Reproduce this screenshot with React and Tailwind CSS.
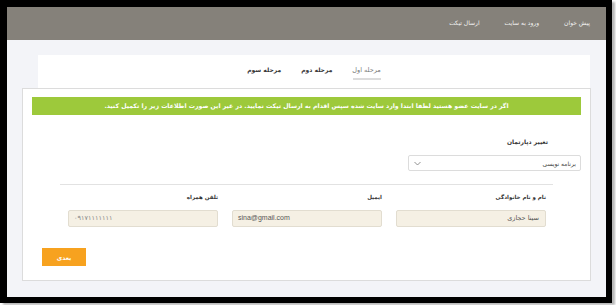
import React from "react";

export default function App() {
  const f = { fontFamily: '"DejaVu Sans", "Noto Sans", sans-serif' };
  return (
    <div className="w-[616px] h-[305px] bg-white overflow-hidden" style={f}>
      <div className="w-[612px] h-[303px] border-t-[7px] border-l-[7px] border-r-[6px] border-b-[6px] border-black bg-[#f3f4f8] shadow-[3px_2px_2px_#b8b8b8] flex flex-col" dir="rtl">
        {/* header */}
        <div className="h-[33px] bg-[#85817a] flex items-center gap-[25px] pr-[16px] pb-[3px] text-[6px] text-[#f4f4f4] shrink-0">
          <span>پیش خوان</span>
          <span>ورود به سایت</span>
          <span>ارسال تیکت</span>
        </div>

        {/* tabs card */}
        <div className="mt-[15px] mr-[16px] ml-[31px] h-[33px] bg-white flex justify-center gap-[20px] pt-[10px] text-[6.5px]">
          <div className="flex flex-col items-center">
            <span className="h-[10px] leading-[10px] text-[#777]">مرحله اول</span>
            <span className="mt-[3px] w-[28px] h-[2px] bg-[#dcdcdc]"></span>
          </div>
          <span className="h-[10px] leading-[10px] font-bold text-[#333] text-[6px]">مرحله دوم</span>
          <span className="h-[10px] leading-[10px] font-bold text-[#333] text-[6px]">مرحله سوم</span>
        </div>

        {/* form card */}
        <div className="mx-[15px] bg-white border border-[#dcdcdc] flex flex-col pt-[8px] pb-[14px]">
          <div className="mx-[9px] h-[18px] bg-[#9dc93b] flex items-center justify-center text-white font-bold text-[6.2px]">
            اگر در سایت عضو هستید لطفا ابتدا وارد سایت شده سپس اقدام به ارسال تیکت نمایید. در غیر این صورت اطلاعات زیر را تکمیل کنید.
          </div>

          <div className="mt-[22px] mr-[42px] h-[10px] leading-[10px] text-[6px] font-bold text-[#333]">
            تغییر دپارتمان
          </div>
          <div className="mt-[8px] mr-[9px] w-[173px] h-[16px] border border-[#dcdcdc] rounded-[2px] flex items-center justify-between px-[4px]">
            <span className="text-[6px] text-[#444]">برنامه نویسی</span>
            <svg width="7" height="5" viewBox="0 0 7 5" className="ml-[1px]">
              <path d="M0.5 1 L3.5 4 L6.5 1" fill="none" stroke="#777" strokeWidth="0.8" />
            </svg>
          </div>

          <div className="mt-[13px] mx-[37px] h-[1px] bg-[#e2e2e2]"></div>

          <div className="mt-[7px] mx-[44px] flex gap-[14px]">
            <div className="w-[150px] flex flex-col">
              <span className="h-[10px] leading-[10px] text-[5.5px] font-bold text-[#333]">نام و نام خانوادگی</span>
              <div className="mt-[8px] h-[17px] bg-[#f5f0e4] border border-[#e2ddd0] rounded-[2px] flex items-center px-[6px] text-[6.5px] text-[#555]">
                سینا حجازی
              </div>
            </div>
            <div className="w-[150px] flex flex-col">
              <span className="h-[10px] leading-[10px] text-[5.5px] font-bold text-[#333]">ایمیل</span>
              <div className="mt-[8px] h-[17px] bg-[#f5f0e4] border border-[#e2ddd0] rounded-[2px] flex items-center px-[5px] text-[7px] text-[#555]" dir="ltr" style={{ fontFamily: '"Liberation Sans", sans-serif' }}>
                sina@gmail.com
              </div>
            </div>
            <div className="w-[150px] flex flex-col ml-[1px]">
              <span className="h-[10px] leading-[10px] text-[5.5px] font-bold text-[#333]">تلفن همراه</span>
              <div className="mt-[8px] h-[17px] bg-[#f5f0e4] border border-[#e2ddd0] rounded-[2px] flex items-center px-[5px] text-[6.5px] text-[#888]" dir="ltr">
                ۰۹۱۷۱۱۱۱۱۱۱
              </div>
            </div>
          </div>

          <div className="mt-[21px] ml-[19px] self-end w-[44px] h-[18px] bg-[#f7a21f] flex items-center justify-center text-white font-bold text-[6px]">
            بعدی
          </div>
        </div>
      </div>
    </div>
  );
}
